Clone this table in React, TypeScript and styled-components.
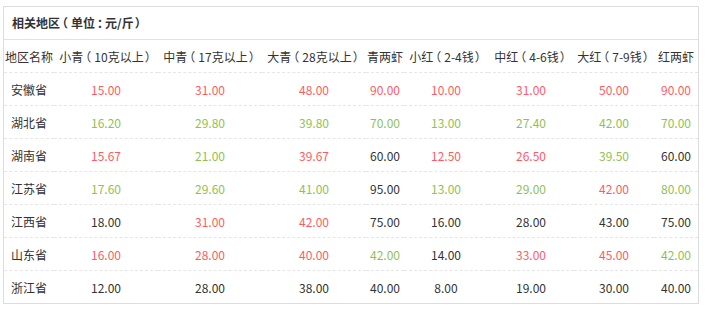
import React from "react";
import styled, { createGlobalStyle } from "styled-components";

const GlobalStyle = createGlobalStyle`
  html, body { margin: 0; padding: 0; background: #fff; }
  body { font-family: "Noto Sans CJK SC", "Noto Sans", sans-serif; }
`;

const Panel = styled.div`
  margin: 6px 0 0 3px;
  width: 696px;
  box-sizing: border-box;
  border: 1px solid #dddddd;
  background: #fff;
`;

const Title = styled.div`
  height: 32px;
  line-height: 32px;
  padding-left: 8px;
  font-size: 12px;
  font-weight: bold;
  color: #333;
  border-bottom: 1px solid #e2e2e2;
`;

/* full-width punctuation: half-width glyph ("halt") padded so the mark sits
   centred in its box, as in the reference font */
const Punct = styled.span<{ $l: number; $r: number }>`
  display: inline-block;
  font-feature-settings: "halt" 1;
  padding-left: ${(p) => p.$l}px;
  padding-right: ${(p) => p.$r}px;
`;

const Table = styled.table`
  width: 694px;
  table-layout: fixed;
  border-collapse: collapse;
  font-size: 12px;
  color: #333;
`;

const Row = styled.tr<{ $last?: boolean }>`
  border-bottom: ${(p) => (p.$last ? "none" : "1px dashed #e6e6e6")};
`;

const HeadCell = styled.th`
  height: 32px;
  padding: 0;
  font-weight: normal;
  text-align: center;
  white-space: nowrap;
  color: #333;
`;

type Tone = "r" | "g" | "k";

const toneColor: Record<Tone, string> = {
  r: "#ff5a64",
  g: "#8fc250",
  k: "#333333",
};

const Cell = styled.td<{ $tone: Tone }>`
  height: 32px;
  padding: 0;
  text-align: center;
  white-space: nowrap;
  color: ${(p) => toneColor[p.$tone]};
`;

const pads: Record<string, [number, number]> = {
  "（": [2, 3],
  "）": [1, 2],
  "：": [2, 2],
};

function Txt({ text }: { text: string }) {
  const parts = text.split(/([（）：])/).filter((s) => s !== "");
  return (
    <>
      {parts.map((s, i) =>
        s in pads ? (
          <Punct key={i} $l={pads[s][0]} $r={pads[s][1]}>
            {s}
          </Punct>
        ) : (
          <React.Fragment key={i}>{s}</React.Fragment>
        )
      )}
    </>
  );
}

const widths = [50, 104, 104, 104, 38, 84, 86, 80, 44];

const headers = [
  "地区名称",
  "小青（10克以上）",
  "中青（17克以上）",
  "大青（28克以上）",
  "青两虾",
  "小红（2-4钱）",
  "中红（4-6钱）",
  "大红（7-9钱）",
  "红两虾",
];

type RowData = { name: string; values: [string, Tone][] };

const rows: RowData[] = [
  {
    name: "安徽省",
    values: [["15.00", "r"], ["31.00", "r"], ["48.00", "r"], ["90.00", "r"], ["10.00", "r"], ["31.00", "r"], ["50.00", "r"], ["90.00", "r"]],
  },
  {
    name: "湖北省",
    values: [["16.20", "g"], ["29.80", "g"], ["39.80", "g"], ["70.00", "g"], ["13.00", "g"], ["27.40", "g"], ["42.00", "g"], ["70.00", "g"]],
  },
  {
    name: "湖南省",
    values: [["15.67", "r"], ["21.00", "g"], ["39.67", "r"], ["60.00", "k"], ["12.50", "r"], ["26.50", "r"], ["39.50", "g"], ["60.00", "k"]],
  },
  {
    name: "江苏省",
    values: [["17.60", "g"], ["29.60", "g"], ["41.00", "g"], ["95.00", "k"], ["13.00", "g"], ["29.00", "g"], ["42.00", "r"], ["80.00", "g"]],
  },
  {
    name: "江西省",
    values: [["18.00", "k"], ["31.00", "r"], ["42.00", "r"], ["75.00", "k"], ["16.00", "k"], ["28.00", "k"], ["43.00", "k"], ["75.00", "k"]],
  },
  {
    name: "山东省",
    values: [["16.00", "r"], ["28.00", "r"], ["40.00", "r"], ["42.00", "g"], ["14.00", "k"], ["33.00", "r"], ["45.00", "r"], ["42.00", "g"]],
  },
  {
    name: "浙江省",
    values: [["12.00", "k"], ["28.00", "k"], ["38.00", "k"], ["40.00", "k"], ["8.00", "k"], ["19.00", "k"], ["30.00", "k"], ["40.00", "k"]],
  },
];

export default function App() {
  return (
    <>
      <GlobalStyle />
      <Panel>
        <Title>
          <Txt text="相关地区（单位：元/斤）" />
        </Title>
        <Table>
          <colgroup>
            {widths.map((w, i) => (
              <col key={i} style={{ width: w }} />
            ))}
          </colgroup>
          <thead>
            <Row>
              {headers.map((h) => (
                <HeadCell key={h}>
                  <Txt text={h} />
                </HeadCell>
              ))}
            </Row>
          </thead>
          <tbody>
            {rows.map((r, i) => (
              <Row key={r.name} $last={i === rows.length - 1}>
                <Cell $tone="k">{r.name}</Cell>
                {r.values.map(([v, t], j) => (
                  <Cell key={j} $tone={t}>
                    {v}
                  </Cell>
                ))}
              </Row>
            ))}
          </tbody>
        </Table>
      </Panel>
    </>
  );
}
